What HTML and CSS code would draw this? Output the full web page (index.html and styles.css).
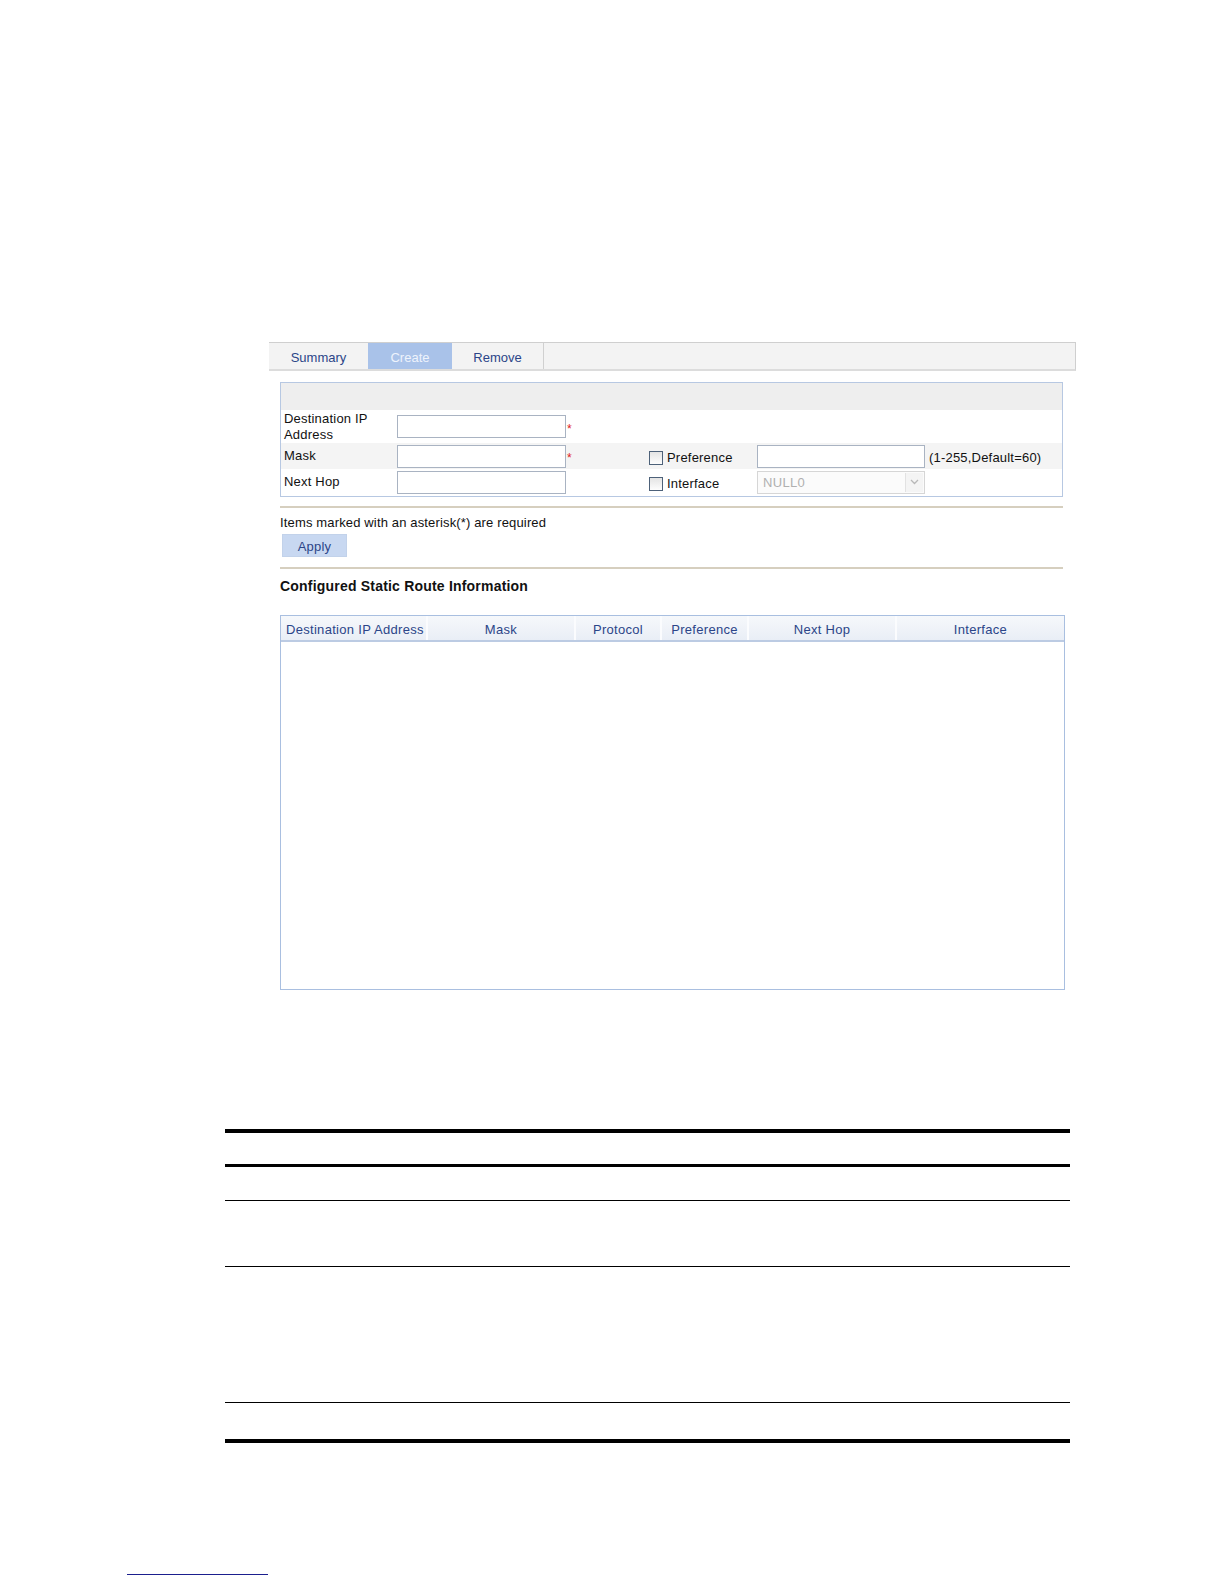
FILE: index.html
```html
<!DOCTYPE html>
<html lang="en">
<head>
    <meta charset="UTF-8">
    <title>Static Route - Create</title>
    <link rel="stylesheet" href="styles.css">
</head>
<body>
    <div class="shot">
        <div class="tabs">
            <span class="tab">Summary</span>
            <span class="tab tab-active">Create</span>
            <span class="tab tab-last">Remove</span>
        </div>

        <div class="content">
            <div class="form-box">
                <div class="form-head"></div>
                <div class="form-row row-first">
                    <div class="label">Destination IP<br>Address</div>
                    <div><input class="field" type="text"></div>
                    <div class="req">*</div>
                    <div></div>
                    <div></div>
                    <div></div>
                </div>
                <div class="form-row row-alt">
                    <div class="label">Mask</div>
                    <div><input class="field" type="text"></div>
                    <div class="req">*</div>
                    <div class="check"><span class="box"></span>Preference</div>
                    <div><input class="field field-wide" type="text"></div>
                    <div class="hint">(1-255,Default=60)</div>
                </div>
                <div class="form-row">
                    <div class="label">Next Hop</div>
                    <div><input class="field" type="text"></div>
                    <div></div>
                    <div class="check"><span class="box"></span>Interface</div>
                    <div>
                        <div class="select">
                            <span class="select-value">NULL0</span>
                            <span class="select-btn">
                                <svg width="9" height="6" viewBox="0 0 9 6"><path d="M1 1 L4.5 4.5 L8 1" fill="none" stroke="#b8b8b8" stroke-width="1.3"/></svg>
                            </span>
                        </div>
                    </div>
                    <div></div>
                </div>
            </div>

            <div class="rule"></div>
            <div class="note">Items marked with an asterisk(*) are required</div>
            <button class="apply">Apply</button>
            <div class="rule rule-second"></div>

            <h2 class="section-title">Configured Static Route Information</h2>

            <div class="route-table">
                <div class="route-head">
                    <div class="col col-left">Destination IP Address</div>
                    <div class="col">Mask</div>
                    <div class="col">Protocol</div>
                    <div class="col">Preference</div>
                    <div class="col">Next Hop</div>
                    <div class="col col-last">Interface</div>
                </div>
            </div>
        </div>
    </div>

    <div class="doc-table">
        <div class="doc-row doc-row-head"></div>
        <div class="doc-row doc-row-1"></div>
        <div class="doc-row doc-row-2"></div>
        <div class="doc-row doc-row-3"></div>
        <div class="doc-row doc-row-4"></div>
    </div>

    <div class="footnote-rule"></div>
</body>
</html>
```

FILE: styles.css
```css
html {
    height: 1584px;
    overflow: hidden;
}

body {
    margin: 0;
    padding: 0;
    height: 1584px;
    overflow: hidden;
    background-color: #fff;
    font-family: 'Liberation Sans', Arial, sans-serif;
    font-size: 13px;
    letter-spacing: 0.2px;
    color: #111;
}

.shot {
    padding-top: 342px;
    margin-left: 269px;
    width: 807px;
}

/* tab strip */
.tabs {
    display: flex;
    height: 26px;
    background-color: #f3f3f3;
    border-top: 1px solid #cfcfcf;
    border-bottom: 2px solid #dcdcdc;
    border-right: 1px solid #cfcfcf;
}

.tab {
    display: flex;
    align-items: center;
    justify-content: center;
    width: 99px;
    font-size: 13px;
    letter-spacing: 0;
    color: #2b4588;
    padding-top: 3px;
}

.tab-active {
    width: 84px;
    background-color: #a9c2e9;
    color: #eef3fc;
}

.tab-last {
    width: 91px;
    border-right: 1px solid #d0d0d0;
}

.content {
    margin-left: 11px;
    width: 785px;
}

/* create form */
.form-box {
    margin-top: 11px;
    width: 781px;
    border: 1px solid #b7c8e2;
    padding-bottom: 1px;
}

.form-head {
    height: 27px;
    background-color: #eeeeee;
}

.form-row {
    display: grid;
    grid-template-columns: 116px 169px 83px 108px 168px 1fr;
    align-items: center;
    height: 26px;
}

.row-first {
    height: 33px;
}

.row-alt {
    background-color: #f4f4f4;
}

.label {
    padding-left: 3px;
    line-height: 16px;
    color: #111;
}

.field {
    display: block;
    box-sizing: border-box;
    width: 169px;
    height: 23px;
    margin: 0;
    border: 1px solid #a9b3c2;
    background-color: #fff;
}

.row-alt .field {
    margin-top: 1px;
}

.field-wide {
    width: 168px;
}

.req {
    color: #e02020;
    font-size: 12px;
    padding-left: 1px;
    padding-top: 4px;
}

.check {
    display: flex;
    align-items: center;
    padding-top: 3px;
}

.box {
    width: 12px;
    height: 12px;
    border: 1px solid #4d6179;
    background: linear-gradient(#e4e4e4, #fdfdfd);
    margin-right: 4px;
}

.hint {
    padding-left: 4px;
    padding-top: 3px;
}

.select {
    box-sizing: border-box;
    width: 168px;
    height: 23px;
    display: flex;
    align-items: center;
    justify-content: space-between;
    border: 1px solid #d6d6d6;
    background-color: #fbfbfb;
}

.select-value {
    padding-left: 5px;
    color: #b0b0b0;
    font-size: 13px;
    letter-spacing: 0.3px;
}

.select-btn {
    width: 17px;
    height: 19px;
    margin-right: 1px;
    display: flex;
    align-items: center;
    justify-content: center;
    background-color: #f4f4f4;
    border-left: 1px solid #e2e2e2;
}

.rule {
    margin-top: 9px;
    width: 783px;
    border-top: 2px solid #d6cfbf;
}

.rule-second {
    margin-top: 10px;
}

.note {
    margin-top: 7px;
    line-height: 16px;
    letter-spacing: 0.15px;
}

.apply {
    display: block;
    margin: 3px 0 0 2px;
    width: 65px;
    height: 23px;
    padding: 2px 0 0;
    border: 1px solid #c2d2ea;
    background-color: #c8d8f1;
    font-family: 'Liberation Sans', Arial, sans-serif;
    font-size: 13px;
    letter-spacing: 0.2px;
    color: #2b4588;
}

.section-title {
    margin: 8px 0 0;
    font-size: 14px;
    line-height: 18px;
    font-weight: bold;
    letter-spacing: 0.2px;
    color: #111;
}

/* route list */
.route-table {
    margin-top: 20px;
    box-sizing: border-box;
    width: 785px;
    height: 375px;
    border: 1px solid #a9bfe0;
}

.route-head {
    display: grid;
    grid-template-columns: 147px 148px 86px 87px 148px 1fr;
    height: 24px;
    background: linear-gradient(#f6f8fb, #e9eef6);
    border-bottom: 2px solid #bccbe3;
}

.col {
    display: flex;
    align-items: center;
    justify-content: center;
    padding-top: 2px;
    font-size: 13px;
    letter-spacing: 0.3px;
    color: #2b4588;
    border-right: 2px solid #fbfcfe;
}

.col-left {
    justify-content: flex-start;
    padding-left: 5px;
}

.col-last {
    border-right: none;
}

/* document table below */
.doc-table {
    margin-top: 139px;
    margin-left: 225px;
    width: 845px;
    border-top: 4px solid #000;
    border-bottom: 4px solid #000;
}

.doc-row {
    border-bottom: 1px solid #000;
}

.doc-row-head {
    height: 31px;
    border-bottom: 3px solid #000;
}

.doc-row-1 {
    height: 33px;
}

.doc-row-2 {
    height: 65px;
}

.doc-row-3 {
    height: 135px;
}

.doc-row-4 {
    height: 36px;
    border-bottom: none;
}

.footnote-rule {
    margin-top: 131px;
    margin-left: 127px;
    width: 141px;
    border-top: 1px solid #1b1f8e;
}
```
